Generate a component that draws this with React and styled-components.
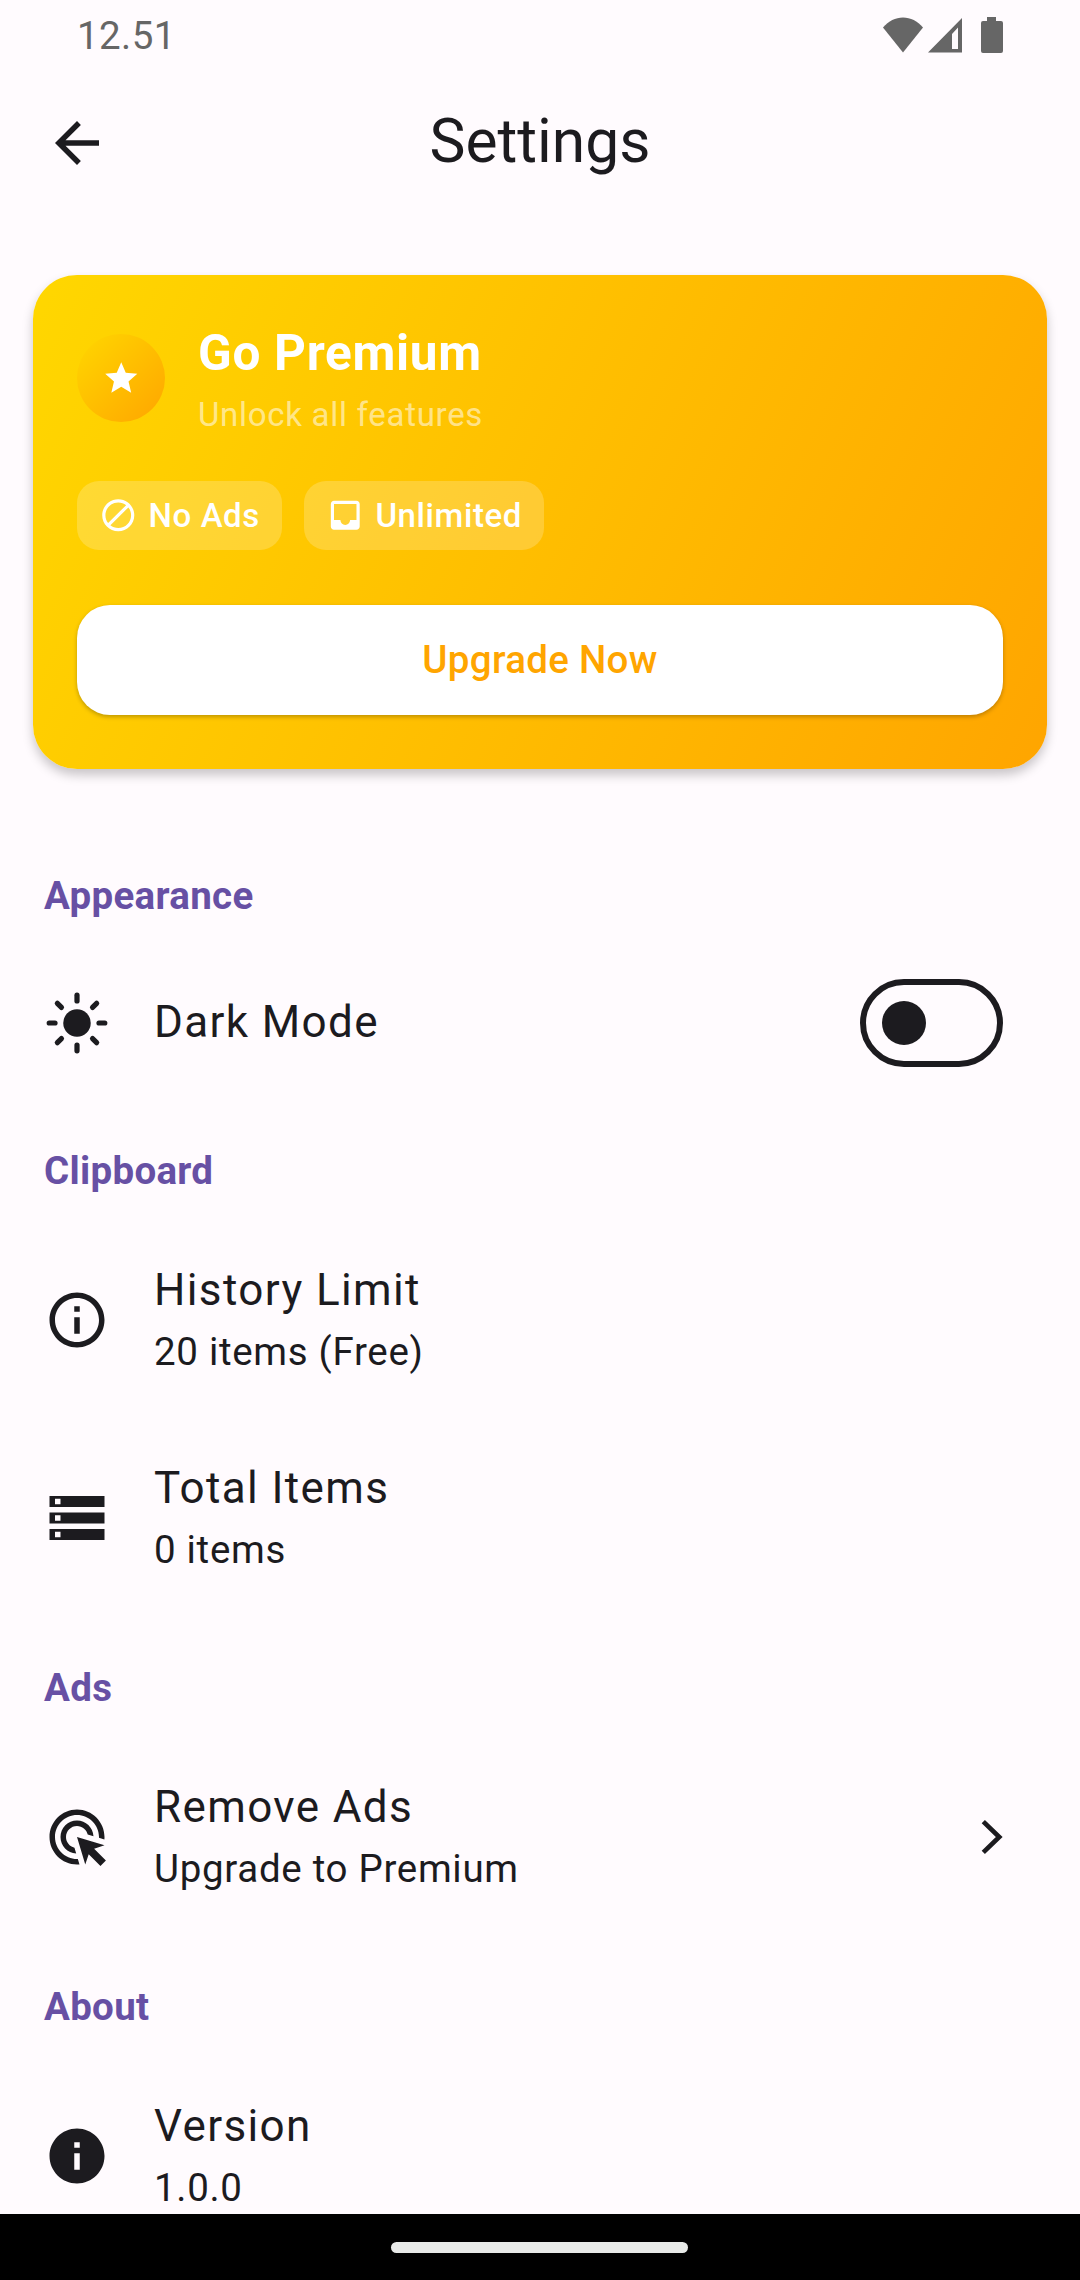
import React from 'react';
import styled, { createGlobalStyle } from 'styled-components';

const GlobalStyle = createGlobalStyle`
  html, body {
    margin: 0;
    padding: 0;
    background: #fffbfe;
  }
  * {
    box-sizing: border-box;
  }
`;

const Screen = styled.div`
  width: 1080px;
  height: 2280px;
  display: flex;
  flex-direction: column;
  overflow: hidden;
  background: #fffbfe;
  color: #1c1b1f;
  font-family: Roboto, 'Liberation Sans', sans-serif;
`;

const StatusBar = styled.div`
  height: 66px;
  flex: none;
  display: flex;
  align-items: center;
  justify-content: space-between;
  padding: 0 77px;
  color: #666666;
`;

const Clock = styled.span`
  margin-top: 6px;
  font-size: 38.5px;
  line-height: 60px;
  letter-spacing: 0.4px;
`;

const StatusIcons = styled.div`
  display: flex;
  align-items: center;
  height: 36px;
  margin-top: 3px;
`;

const AppBar = styled.header`
  height: 154px;
  flex: none;
  display: flex;
  align-items: center;
  padding: 0 44px;
`;

const AppBarTitle = styled.h1`
  flex: 1;
  margin: 0 66px 3px 0;
  text-align: center;
  font-size: 60.5px;
  font-weight: 400;
  line-height: 80px;
`;

const Glyph = styled.svg`
  display: block;
  flex: none;
  fill: currentColor;
`;

const Content = styled.main`
  flex: 1;
  min-height: 0;
  overflow: hidden;
`;

const PremiumCard = styled.section`
  margin: 55px 33px 56px;
  height: 494px;
  padding: 49px 44px 54px;
  display: flex;
  flex-direction: column;
  border-radius: 44px;
  background: linear-gradient(116deg, #ffd700, #ffa500);
  box-shadow: 0 6px 11px rgba(0, 0, 0, 0.22);
  color: #ffffff;
`;

const CardHeader = styled.div`
  display: flex;
  align-items: center;
  gap: 33px;
`;

const StarBadge = styled.div`
  width: 88px;
  height: 88px;
  flex: none;
  margin-bottom: 2px;
  display: flex;
  align-items: center;
  justify-content: center;
  border-radius: 50%;
  background: linear-gradient(135deg, #ffd700, #ffa500);
`;

const CardTitle = styled.div`
  font-size: 49.5px;
  font-weight: 700;
  line-height: 58px;
  letter-spacing: 0.7px;
  margin-bottom: 13px;
`;

const CardSubtitle = styled.div`
  font-size: 33px;
  line-height: 39px;
  letter-spacing: 0.7px;
  color: rgba(255, 255, 255, 0.55);
`;

const ChipRow = styled.div`
  display: flex;
  gap: 22px;
  margin-top: 47px;
`;

const Chip = styled.div`
  height: 69px;
  display: flex;
  align-items: center;
  gap: 11px;
  padding: 0 22px;
  border-radius: 22px;
  background: rgba(255, 255, 255, 0.2);
  font-size: 33px;
  font-weight: 500;
  letter-spacing: 0.6px;
`;

const UpgradeButton = styled.button`
  height: 110px;
  margin-top: 55px;
  padding: 0 0 2px;
  flex: none;
  border: 0;
  border-radius: 33px;
  background: #ffffff;
  box-shadow: 0 2px 4px rgba(0, 0, 0, 0.25);
  color: #ffa500;
  font-family: inherit;
  font-size: 38.5px;
  font-weight: 500;
  letter-spacing: 0.3px;
`;

const SectionHeading = styled.h2`
  margin: 0;
  padding: 48px 44px 28px;
  font-size: 38.5px;
  font-weight: 700;
  line-height: 45px;
  letter-spacing: 0.3px;
  color: #6750a4;
`;

const Row = styled.div`
  height: ${(p) => (p.$tall ? 198 : 154)}px;
  display: flex;
  align-items: center;
  gap: 44px;
  padding: 0 ${(p) => p.$endInset}px 0 44px;
`;

const RowText = styled.div`
  flex: 1;
  min-width: 0;
  padding-bottom: 3px;
`;

const RowTitle = styled.div`
  font-size: 44px;
  line-height: 66px;
  letter-spacing: 1.375px;
`;

const RowSubtitle = styled.div`
  font-size: 38.5px;
  line-height: 58px;
  letter-spacing: 0.69px;
`;

const SwitchTrack = styled.div`
  width: 143px;
  height: 88px;
  flex: none;
  display: flex;
  align-items: center;
  padding-left: 16px;
  border: 6px solid #1c1b1f;
  border-radius: 44px;
`;

const SwitchThumb = styled.div`
  width: 44px;
  height: 44px;
  border-radius: 50%;
  background: #1c1b1f;
`;

const NavBar = styled.div`
  height: 66px;
  flex: none;
  display: flex;
  align-items: center;
  justify-content: center;
  padding-right: 2px;
  background: #000000;
`;

const NavPill = styled.div`
  width: 297px;
  height: 11px;
  border-radius: 6px;
  background: #e8eae8;
`;

const paths = {
  back: 'M20 11H7.83l5.59-5.59L12 4l-8 8 8 8 1.41-1.41L7.83 13H20v-2z',
  star: 'M12 17.27L18.18 21l-1.64-7.03L22 9.24l-7.19-.61L12 2 9.19 8.63 2 9.24l5.46 4.73L5.82 21z',
  block:
    'M12 2C6.48 2 2 6.48 2 12s4.48 10 10 10 10-4.48 10-10S17.52 2 12 2zM4 12c0-4.42 3.58-8 8-8 1.85 0 3.55.63 4.9 1.69L5.69 16.9C4.63 15.55 4 13.85 4 12zm8 8c-1.85 0-3.55-.63-4.9-1.69L18.31 7.1C19.37 8.45 20 10.15 20 12c0 4.42-3.58 8-8 8z',
  inbox:
    'M19 3H4.99c-1.11 0-1.98.89-1.98 2L3 19c0 1.1.88 2 1.99 2H19c1.1 0 2-.9 2-2V5c0-1.11-.9-2-2-2zm0 12h-4c0 1.66-1.35 3-3 3s-3-1.34-3-3H4.99V5H19v10z',
  infoOutline:
    'M11 7h2v2h-2zm0 4h2v6h-2zm1-9C6.48 2 2 6.48 2 12s4.48 10 10 10 10-4.48 10-10S17.52 2 12 2zm0 18c-4.41 0-8-3.59-8-8s3.59-8 8-8 8 3.59 8 8-3.59 8-8 8z',
  storage:
    'M2 20h20v-4H2v4zm2-3h2v2H4v-2zM2 4v4h20V4H2zm4 3H4V5h2v2zm-4 7h20v-4H2v4zm2-3h2v2H4v-2z',
  adsClick:
    'M11.71,17.99C8.53,17.84,6,15.22,6,12c0-3.31,2.69-6,6-6c3.22,0,5.84,2.53,5.99,5.71l-2.1-0.63C15.48,9.31,13.89,8,12,8c-2.21,0-4,1.79-4,4c0,1.89,1.31,3.48,3.08,3.89L11.71,17.99z M22,12c0,0.3-0.01,0.6-0.04,0.9l-1.97-0.59C20,12.21,20,12.1,20,12c0-4.42-3.58-8-8-8s-8,3.58-8,8s3.58,8,8,8c0.1,0,0.21,0,0.31-0.01l0.59,1.97C12.6,21.99,12.3,22,12,22C6.48,22,2,17.52,2,12C2,6.48,6.48,2,12,2S22,6.48,22,12z M18.23,16.26L22,15l-10-3l3,10l1.26-3.77l4.27,4.27l1.98-1.98L18.23,16.26z',
  info: 'M12 2C6.48 2 2 6.48 2 12s4.48 10 10 10 10-4.48 10-10S17.52 2 12 2zm1 15h-2v-6h2v6zm0-8h-2V7h2v2z',
};

function Icon({ name, size = 66 }) {
  return (
    <Glyph width={size} height={size} viewBox="0 0 24 24">
      <path d={paths[name]} />
    </Glyph>
  );
}

function ChevronIcon() {
  return (
    <Glyph width={66} height={66} viewBox="0 0 24 24">
      <path
        d="M9.2 6.4L15 12l-5.8 5.6"
        fill="none"
        stroke="currentColor"
        strokeWidth="1.7"
      />
    </Glyph>
  );
}

function SunIcon() {
  const rays = [0, 45, 90, 135, 180, 225, 270, 315];
  return (
    <Glyph width={66} height={66} viewBox="0 0 24 24">
      <circle cx="12" cy="12" r="5" />
      {rays.map((angle) => (
        <line
          key={angle}
          x1="12"
          y1="1.9"
          x2="12"
          y2="4"
          stroke="currentColor"
          strokeWidth="1.9"
          strokeLinecap="round"
          transform={`rotate(${angle} 12 12)`}
        />
      ))}
    </Glyph>
  );
}

const BatteryGlyph = styled(Glyph)`
  margin-left: 18px;
`;

function StatusGlyphs() {
  return (
    <StatusIcons>
      <Glyph width={44} height={36} viewBox="0 0 44 36">
        <path d="M0 10.5C5.5 4 12.5.5 20 .5s14.5 3.5 20 10L20 35.5z" />
      </Glyph>
      <Glyph width={36} height={36} viewBox="0 0 36 36">
        <path d="M35 1v34.5H1zM25 17v15h6V10.5z" fillRule="evenodd" />
      </Glyph>
      <BatteryGlyph width={22} height={36} viewBox="0 0 22 36">
        <path d="M6 0h9v4h5a2 2 0 0 1 2 2v28a2 2 0 0 1-2 2H2a2 2 0 0 1-2-2V6a2 2 0 0 1 2-2h4z" />
      </BatteryGlyph>
    </StatusIcons>
  );
}

function App() {
  return (
    <Screen>
      <GlobalStyle />
      <StatusBar>
        <Clock>12.51</Clock>
        <StatusGlyphs />
      </StatusBar>
      <AppBar>
        <Icon name="back" />
        <AppBarTitle>Settings</AppBarTitle>
      </AppBar>
      <Content>
        <PremiumCard>
          <CardHeader>
            <StarBadge>
              <Icon name="star" size={38.5} />
            </StarBadge>
            <div>
              <CardTitle>Go Premium</CardTitle>
              <CardSubtitle>Unlock all features</CardSubtitle>
            </div>
          </CardHeader>
          <ChipRow>
            <Chip>
              <Icon name="block" size={38.5} />
              No Ads
            </Chip>
            <Chip>
              <Icon name="inbox" size={38.5} />
              Unlimited
            </Chip>
          </ChipRow>
          <UpgradeButton>Upgrade Now</UpgradeButton>
        </PremiumCard>

        <SectionHeading>Appearance</SectionHeading>
        <Row $endInset={77}>
          <SunIcon />
          <RowText>
            <RowTitle>Dark Mode</RowTitle>
          </RowText>
          <SwitchTrack>
            <SwitchThumb />
          </SwitchTrack>
        </Row>

        <SectionHeading>Clipboard</SectionHeading>
        <Row $tall $endInset={44}>
          <Icon name="infoOutline" />
          <RowText>
            <RowTitle>History Limit</RowTitle>
            <RowSubtitle>20 items (Free)</RowSubtitle>
          </RowText>
        </Row>
        <Row $tall $endInset={44}>
          <Icon name="storage" />
          <RowText>
            <RowTitle>Total Items</RowTitle>
            <RowSubtitle>0 items</RowSubtitle>
          </RowText>
        </Row>

        <SectionHeading>Ads</SectionHeading>
        <Row $tall $endInset={56}>
          <Icon name="adsClick" />
          <RowText>
            <RowTitle>Remove Ads</RowTitle>
            <RowSubtitle>Upgrade to Premium</RowSubtitle>
          </RowText>
          <ChevronIcon />
        </Row>

        <SectionHeading>About</SectionHeading>
        <Row $tall $endInset={44}>
          <Icon name="info" />
          <RowText>
            <RowTitle>Version</RowTitle>
            <RowSubtitle>1.0.0</RowSubtitle>
          </RowText>
        </Row>
      </Content>
      <NavBar>
        <NavPill />
      </NavBar>
    </Screen>
  );
}

export default App;
